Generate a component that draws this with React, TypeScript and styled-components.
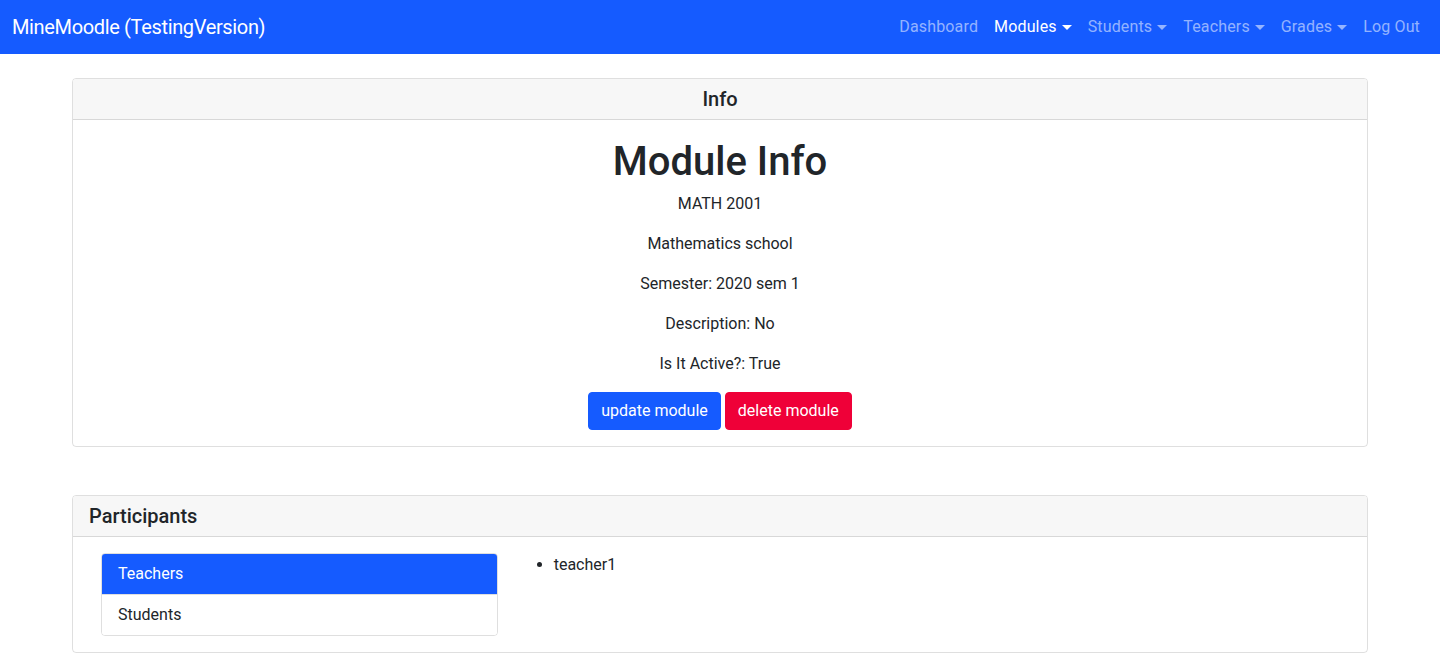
import React from "react";
import styled, { createGlobalStyle } from "styled-components";

const BLUE = "#155bff";
const RED = "#ef0038";

const Global = createGlobalStyle`
  * { box-sizing: border-box; }
  body {
    margin: 0;
    font-family: Roboto, "Liberation Sans", Arial, sans-serif;
    font-size: 16px;
    line-height: 1.5;
    color: #212529;
    background: #fff;
  }
`;

const Navbar = styled.nav`
  height: 54px;
  background: ${BLUE};
  display: flex;
  align-items: center;
  justify-content: space-between;
  padding: 0 12px;
`;

const Brand = styled.a`
  color: #fff;
  font-size: 20px;
  line-height: 30px;
  letter-spacing: -0.35px;
  text-decoration: none;
`;

const NavList = styled.div`
  display: flex;
  align-items: center;
`;

const NavLink = styled.a<{ $active?: boolean; $caret?: boolean }>`
  color: ${(p) => (p.$active ? "#fff" : "rgba(255,255,255,0.55)")};
  padding: 8px;
  text-decoration: none;
  line-height: 24px;
  letter-spacing: 0.15px;
  display: inline-flex;
  align-items: center;
  ${(p) =>
    p.$caret &&
    `&::after {
      content: "";
      display: inline-block;
      margin-left: 5px;
      border-top: 5px solid;
      border-left: 5px solid transparent;
      border-right: 5px solid transparent;
      border-bottom: 0;
    }`}
`;

const Container = styled.main`
  max-width: 1320px;
  margin: 0 auto;
  padding: 24px 12px 0;
`;

const Card = styled.section<{ $mt?: number }>`
  border: 1px solid rgba(0, 0, 0, 0.125);
  border-radius: 4px;
  margin-top: ${(p) => p.$mt ?? 0}px;
  overflow: hidden;
`;

const CardHeader = styled.div<{ $center?: boolean }>`
  background: #f7f7f7;
  border-bottom: 1px solid rgba(0, 0, 0, 0.125);
  padding: 8px 16px;
  font-size: 20px;
  line-height: 24px;
  font-weight: 500;
  text-align: ${(p) => (p.$center ? "center" : "left")};
`;

const CardBody = styled.div<{ $center?: boolean }>`
  padding: 16px;
  text-align: ${(p) => (p.$center ? "center" : "left")};
`;

const Title = styled.h1`
  font-size: 40px;
  line-height: 48px;
  font-weight: 500;
  margin: 0 0 8px;
  padding-top: 2px;
  margin-bottom: 6px;
`;

const Para = styled.p`
  margin: 0 0 16px;
`;

const ButtonRow = styled.div`
  display: flex;
  justify-content: center;
  gap: 4px;
`;

const Button = styled.button<{ $bg: string }>`
  background: ${(p) => p.$bg};
  color: #fff;
  border: 1px solid ${(p) => p.$bg};
  border-radius: 4px;
  padding: 6px 12px;
  font: inherit;
  font-size: 16px;
  line-height: 24px;
`;

const Grid = styled.div`
  display: grid;
  grid-template-columns: calc((100% + 24px) / 3 - 24px) 1fr;
  padding: 0 12px;
  column-gap: 24px;
`;

const ListGroup = styled.div`
  display: flex;
  flex-direction: column;
  border: 1px solid rgba(0, 0, 0, 0.125);
  border-radius: 4px;
  overflow: hidden;
`;

const ListItem = styled.a<{ $active?: boolean }>`
  padding: 8px 16px;
  line-height: 24px;
  color: ${(p) => (p.$active ? "#fff" : "#212529")};
  background: ${(p) => (p.$active ? BLUE : "#fff")};
  text-decoration: none;
  & + & {
    border-top: 1px solid rgba(0, 0, 0, 0.125);
  }
`;

const Bullets = styled.ul`
  margin: 0;
  padding-left: 32px;
`;

export default function App() {
  return (
    <>
      <Global />
      <Navbar>
        <Brand href="#">MineMoodle (TestingVersion)</Brand>
        <NavList>
          <NavLink href="#">Dashboard</NavLink>
          <NavLink href="#" $active $caret>Modules</NavLink>
          <NavLink href="#" $caret>Students</NavLink>
          <NavLink href="#" $caret>Teachers</NavLink>
          <NavLink href="#" $caret>Grades</NavLink>
          <NavLink href="#">Log Out</NavLink>
        </NavList>
      </Navbar>
      <Container>
        <Card>
          <CardHeader $center>Info</CardHeader>
          <CardBody $center>
            <Title>Module Info</Title>
            <Para>MATH 2001</Para>
            <Para>Mathematics school</Para>
            <Para>Semester: 2020 sem 1</Para>
            <Para>Description: No</Para>
            <Para>Is It Active?: True</Para>
            <ButtonRow>
              <Button $bg={BLUE}>update module</Button>
              <Button $bg={RED}>delete module</Button>
            </ButtonRow>
          </CardBody>
        </Card>
        <Card $mt={48}>
          <CardHeader>Participants</CardHeader>
          <CardBody>
            <Grid>
              <ListGroup>
                <ListItem href="#" $active>Teachers</ListItem>
                <ListItem href="#">Students</ListItem>
              </ListGroup>
              <Bullets>
                <li>teacher1</li>
              </Bullets>
            </Grid>
          </CardBody>
        </Card>
      </Container>
    </>
  );
}
